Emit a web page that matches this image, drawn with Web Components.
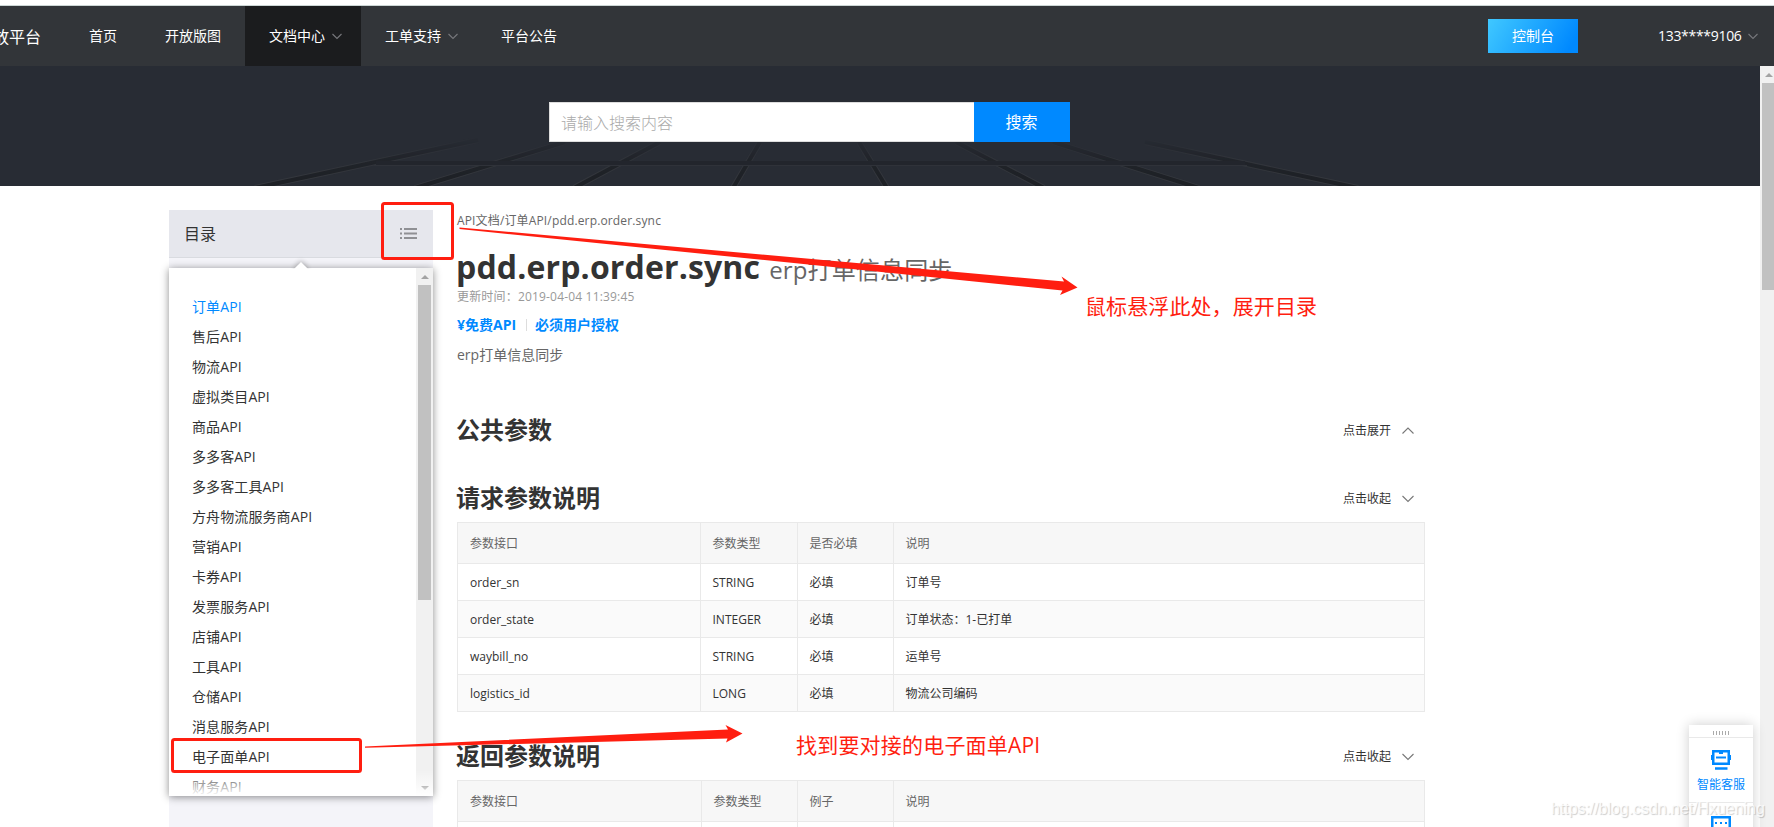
<!DOCTYPE html>
<html lang="zh-CN">
<head>
<meta charset="UTF-8">
<title>pdd.erp.order.sync</title>
<style>
    body{
        margin:0;
        width:1774px;
        height:827px;
        overflow:hidden;
        background-color:#fff;
        color:#333;
        font-family:"Open Sans", "Noto Sans CJK SC", sans-serif;
        font-size:12px;
    }
</style>
</head>
<body>
<open-platform-page></open-platform-page>

<script>
class ArrowIcon extends HTMLElement {

    constructor() {
        super();
        this.shadow = this.attachShadow({mode: 'open'});
        this.render();
    }

    render() {
        const size = Number(this.getAttribute('size') || 10);
        const up = this.hasAttribute('up');
        const half = size / 2;
        const points = up
            ? `0.5,${half + 0.5} ${half},1 ${size - 0.5},${half + 0.5}`
            : `0.5,1 ${half},${half + 0.5} ${size - 0.5},1`;

        this.shadow.innerHTML =
        /*html*/
        `
        <style>
            :host{
                display:block;
                width:${size}px;
                height:${half + 2}px;
            }

            svg{
                display:block;
            }
        </style>

        <svg width="${size}" height="${half + 2}">
            <polyline points="${points}" fill="none" stroke="currentColor" stroke-width="1.1"/>
        </svg>
        `;
    }
}

customElements.define('arrow-icon', ArrowIcon);

class NavItem extends HTMLElement {

    constructor() {
        super();
        this.shadow = this.attachShadow({mode: 'open'});
        this.render();
    }

    render() {
        const arrow = this.hasAttribute('dropdown') ? '<arrow-icon></arrow-icon>' : '';

        this.shadow.innerHTML =
        /*html*/
        `
        <style>
            :host{
                display:flex;
                align-items:center;
                box-sizing:border-box;
                height:60px;
                padding:0 24px 2px;
                color:#fff;
                font-size:14px;
                white-space:nowrap;
            }

            :host([active]){
                background-color:#1b1c1e;
            }

            arrow-icon{
                margin:2px -5px 0 7px;
                color:#77787c;
            }
        </style>

        <slot></slot>${arrow}
        `;
    }
}

customElements.define('nav-item', NavItem);

class TopNav extends HTMLElement {

    constructor() {
        super();
        this.shadow = this.attachShadow({mode: 'open'});
        this.render();
    }

    render() {
        this.shadow.innerHTML =
        /*html*/
        `
        <style>
            :host{
                display:flex;
                align-items:center;
                height:60px;
                margin-top:5px;
                border-top:1px solid #ccd6d5;
                background-color:#323539;
                color:#fff;
            }

            .logo{
                display:flex;
                justify-content:flex-end;
                width:41px;
                margin-right:24px;
                overflow:hidden;
                font-size:16px;
                white-space:nowrap;
            }

            nav{
                display:flex;
                flex:1;
            }

            .console{
                width:90px;
                height:34px;
                line-height:33px;
                text-align:center;
                font-size:14px;
                background:linear-gradient(120deg, #40c8ff, #0089ff 90%);
            }

            .account{
                display:flex;
                align-items:center;
                margin-left:80px;
                padding-right:16px;
                font-size:14px;
            }

            .account span{
                width:83px;
                padding-bottom:2px;
                letter-spacing:-0.3px;
            }

            .account arrow-icon{
                margin-left:7px;
                color:#77787c;
            }
        </style>

        <div class="logo">放平台</div>
        <nav>
            <nav-item>首页</nav-item>
            <nav-item>开放版图</nav-item>
            <nav-item active dropdown>文档中心</nav-item>
            <nav-item dropdown>工单支持</nav-item>
            <nav-item>平台公告</nav-item>
        </nav>
        <div class="console">控制台</div>
        <div class="account"><span>133****9106</span><arrow-icon></arrow-icon></div>
        `;
    }
}

customElements.define('top-nav', TopNav);

class SearchBanner extends HTMLElement {

    constructor() {
        super();
        this.shadow = this.attachShadow({mode: 'open'});
        this.render();
    }

    render() {
        // floor grid: one horizontal line and eight rays
        const rays = [
            [478, 74, 255, 122], [565, 76, 415, 122], [660, 76, 574, 122], [760, 76, 733, 122],
            [859, 76, 887, 122], [956, 76, 1044, 122], [1053, 76, 1199, 122], [1145, 76, 1358, 122]
        ];
        const lines = rays.map(([x1, y1, x2, y2]) =>
            `<path d="M${x1} ${y1}L${x2} ${y2}" stroke="#34373d" stroke-width="6"/>
             <path d="M${x1} ${y1}L${x2} ${y2}" stroke="#1e2126" stroke-width="4"/>`).join('');

        this.shadow.innerHTML =
        /*html*/
        `
        <style>
            :host{
                display:block;
                position:relative;
                height:120px;
                background-color:#282c34;
            }

            svg{
                position:absolute;
                left:0;
                top:0;
            }

            .search{
                display:flex;
                position:relative;
                box-sizing:border-box;
                width:521px;
                height:76px;
                margin-left:549px;
                padding-top:36px;
                font-size:16px;
                line-height:40px;
            }

            .input{
                box-sizing:border-box;
                width:425px;
                height:40px;
                padding-left:11px;
                border:1px solid #ddd;
                border-right:0;
                background-color:#fff;
                color:#aaa;
                font-weight:300;
            }

            .button{
                width:95px;
                padding-right:1px;
                text-align:center;
                background-color:#0089ff;
                color:#fff;
            }
        </style>

        <svg width="1760" height="120">
            <defs>
                <linearGradient id="fade" x1="0" y1="74" x2="0" y2="112" gradientUnits="userSpaceOnUse">
                    <stop offset="0" stop-color="#fff" stop-opacity="0.1"/>
                    <stop offset="0.5" stop-color="#fff" stop-opacity="0.7"/>
                    <stop offset="1" stop-color="#fff"/>
                </linearGradient>
                <mask id="floor" maskUnits="userSpaceOnUse" x="0" y="0" width="1760" height="120">
                    <rect width="1760" height="120" fill="url(#fade)"/>
                </mask>
            </defs>
            <g mask="url(#floor)">
                ${lines}
            </g>
            <rect x="376" y="95" width="869" height="4" fill="#22252c"/>
            <rect x="374" y="99" width="873" height="1" fill="#2f3239"/>
        </svg>
        <div class="search">
            <div class="input">请输入搜索内容</div>
            <div class="button">搜索</div>
        </div>
        `;
    }
}

customElements.define('search-banner', SearchBanner);

class ScrollTrack extends HTMLElement {

    constructor() {
        super();
        this.shadow = this.attachShadow({mode: 'open'});
        this.render();
    }

    render() {
        const thumb = this.getAttribute('thumb');
        const down = this.hasAttribute('down') ? '<i class="down"></i>' : '';

        this.shadow.innerHTML =
        /*html*/
        `
        <style>
            :host{
                display:flex;
                flex-direction:column;
                width:17px;
                flex:none;
                background-color:#f1f1f1;
            }

            .button{
                display:flex;
                align-items:center;
                justify-content:center;
                height:17px;
            }

            .up{
                border:4px solid transparent;
                border-top:0;
                border-bottom-color:#a3a3a3;
            }

            .down{
                border:4px solid transparent;
                border-bottom:0;
                border-top-color:#505050;
            }

            .thumb{
                height:${thumb}px;
                margin:0 2px;
                background-color:#c1c1c1;
            }

            .rest{
                flex:1;
            }
        </style>

        <div class="button"><i class="up"></i></div>
        <div class="thumb"></div>
        <div class="rest"></div>
        <div class="button">${down}</div>
        `;
    }
}

customElements.define('scroll-track', ScrollTrack);

class CatalogMenu extends HTMLElement {

    constructor() {
        super();
        this.shadow = this.attachShadow({mode: 'open'});
        this.render();
    }

    render() {
        const items = ['订单', '售后', '物流', '虚拟类目', '商品', '多多客', '多多客工具', '方舟物流服务商',
            '营销', '卡券', '发票服务', '店铺', '工具', '仓储', '消息服务', '电子面单', '财务'];

        this.shadow.innerHTML =
        /*html*/
        `
        <style>
            :host{
                display:block;
                position:relative;
                width:264px;
                background-color:#f4f4f9;
            }

            .title{
                display:flex;
                align-items:center;
                justify-content:space-between;
                height:47px;
                padding:0 16px 0 15px;
                border-bottom:1px solid #d9dbe0;
                background-color:#e6e7ed;
                font-size:16px;
            }

            .title span{
                padding-bottom:1px;
            }

            .dropdown{
                display:flex;
                position:absolute;
                left:0;
                top:58px;
                width:264px;
                height:528px;
                background-color:#fff;
                box-shadow:0 1px 8px rgba(0, 0, 0, 0.45);
            }

            .caret{
                position:absolute;
                left:127px;
                top:-4px;
                width:10px;
                height:10px;
                background-color:#fff;
                box-shadow:-1px -1px 5px rgba(0, 0, 0, 0.25);
                clip-path:polygon(-6px -6px, 16px -6px, -6px 16px);
                transform:rotate(45deg);
            }

            ul{
                flex:1;
                margin:0;
                padding:24px 0 0 23px;
                overflow:hidden;
                list-style:none;
                font-size:14px;
                line-height:30px;
            }

            li{
                letter-spacing:0.1px;
            }

            li:first-child{
                color:#0089ff;
            }

            .fade{
                position:absolute;
                left:0;
                right:0;
                bottom:0;
                height:26px;
                background:linear-gradient(rgba(255, 255, 255, 0), #fff);
            }
        </style>

        <div class="title">
            <span>目录</span>
            <svg width="17" height="11" fill="#8f9094">
                <path d="M0 0h2v2H0zM4 0h13v2H4zM0 4.500h2v2H0zM4 4.500h13v2H4zM0 9h2v2H0zM4 9h13v2H4z"/>
            </svg>
        </div>
        <div class="dropdown">
            <div class="caret"></div>
            <ul>${items.map(item => `<li>${item}API</li>`).join('')}</ul>
            <scroll-track thumb="315" down></scroll-track>
            <div class="fade"></div>
        </div>
        `;
    }
}

customElements.define('catalog-menu', CatalogMenu);

class DocSection extends HTMLElement {

    constructor() {
        super();
        this.shadow = this.attachShadow({mode: 'open'});
        this.render();
    }

    render() {
        const closed = this.hasAttribute('closed');

        this.shadow.innerHTML =
        /*html*/
        `
        <style>
            :host{
                display:block;
                margin-bottom:25px;
            }

            :host([closed]){
                margin-bottom:28px;
            }

            .head{
                display:flex;
                align-items:center;
                height:40px;
                padding-right:11px;
            }

            h2{
                flex:1;
                margin:0 0 0 -1px;
                font-size:24px;
                line-height:38px;
                padding-bottom:2px;
            }

            span{
                padding-bottom:2px;
                margin-right:11px;
            }

            arrow-icon{
                margin-bottom:1px;
                color:#777;
            }

            ::slotted(*){
                margin-top:3px;
            }
        </style>

        <div class="head">
            <h2>${this.getAttribute('heading')}</h2>
            <span>${closed ? '点击展开' : '点击收起'}</span>
            <arrow-icon size="12" ${closed ? 'up' : ''}></arrow-icon>
        </div>
        <slot></slot>
        `;
    }
}

customElements.define('doc-section', DocSection);

class ParamTable extends HTMLElement {

    constructor() {
        super();
        this.shadow = this.attachShadow({mode: 'open'});
        this.render();
    }

    render() {
        const heads = this.getAttribute('heads').split('|');
        const rows = this.getAttribute('rows').split(';').map(row => row.split('|'));

        this.shadow.innerHTML =
        /*html*/
        `
        <style>
            :host{
                display:block;
                border:1px solid #e9e9e9;
                border-width:1px 0 0 1px;
            }

            .row{
                display:grid;
                grid-template-columns:var(--columns, 243px 97px 96px) 1fr;
                height:37px;
                line-height:34px;
            }

            .row.even{
                background-color:#fafafa;
            }

            .row.header{
                height:41px;
                line-height:38px;
                background-color:#f7f7f7;
                color:#666;
            }

            .row div{
                padding:2px 0 0 12px;
                border:1px solid #e9e9e9;
                border-width:0 1px 1px 0;
            }

            .row div + div{
                padding-left:11.5px;
            }
        </style>

        <div class="row header">${heads.map(text => `<div>${text}</div>`).join('')}</div>
        ${rows.map((row, i) => `<div class="row ${i % 2 ? 'even' : ''}">${row.map(text => `<div>${text}</div>`).join('')}</div>`).join('')}
        `;
    }
}

customElements.define('param-table', ParamTable);

class ApiDoc extends HTMLElement {

    constructor() {
        super();
        this.shadow = this.attachShadow({mode: 'open'});
        this.render();
    }

    render() {
        this.shadow.innerHTML =
        /*html*/
        `
        <style>
            :host{
                display:block;
                width:968px;
                white-space:nowrap;
            }

            .breadcrumb{
                margin-top:1px;
                line-height:20px;
                letter-spacing:0.15px;
                color:#666;
            }

            h1{
                display:flex;
                align-items:baseline;
                margin:14px 0 1px -1px;
                height:44px;
                font-size:32px;
                line-height:44px;
                letter-spacing:0.15px;
            }

            h1 small{
                margin-left:9px;
                color:#666;
                font-size:24px;
                font-weight:normal;
            }

            .updated{
                line-height:14px;
                letter-spacing:0.18px;
                color:#999;
            }

            .tags{
                display:flex;
                align-items:center;
                margin-top:11px;
                line-height:20px;
                color:#0089ff;
                font-size:14px;
                font-weight:bold;
            }

            .tags i{
                width:1px;
                height:12px;
                margin:0 8px 0 10px;
                background-color:#ddd;
            }

            .summary{
                margin:10px 0 46px;
                line-height:20px;
                color:#666;
                font-size:14px;
            }
        </style>

        <div class="breadcrumb">API文档/订单API/pdd.erp.order.sync</div>
        <h1><span>pdd.erp.order.sync</span><small>erp打单信息同步</small></h1>
        <div class="updated">更新时间：2019-04-04 11:39:45</div>
        <div class="tags"><span>¥免费API</span><i></i><span>必须用户授权</span></div>
        <div class="summary">erp打单信息同步</div>
        <doc-section heading="公共参数" closed></doc-section>
        <doc-section heading="请求参数说明">
            <param-table heads="参数接口|参数类型|是否必填|说明"
                rows="order_sn|STRING|必填|订单号;order_state|INTEGER|必填|订单状态：1-已打单;waybill_no|STRING|必填|运单号;logistics_id|LONG|必填|物流公司编码"></param-table>
        </doc-section>
        <doc-section heading="返回参数说明">
            <param-table style="--columns:244px 96px 96px" heads="参数接口|参数类型|例子|说明" rows="|||"></param-table>
        </doc-section>
        `;
    }
}

customElements.define('api-doc', ApiDoc);

class ServiceWidget extends HTMLElement {

    constructor() {
        super();
        this.shadow = this.attachShadow({mode: 'open'});
        this.render();
    }

    render() {
        this.shadow.innerHTML =
        /*html*/
        `
        <style>
            :host{
                display:block;
                position:absolute;
                left:1689px;
                top:725px;
                width:64px;
                height:130px;
                background-color:#fff;
                box-shadow:0 0 12px rgba(0, 0, 0, 0.2);
                color:#0089ff;
            }

            .grip{
                display:flex;
                justify-content:center;
                gap:2px;
                height:6px;
                padding-top:6px;
                border-bottom:1px solid #e9e9e9;
            }

            .grip i{
                width:1px;
                height:4px;
                background-color:#aaa;
            }

            .entry{
                display:flex;
                flex-direction:column;
                align-items:center;
                height:52px;
                padding-top:12px;
                border-bottom:1px solid #e9e9e9;
            }

            .entry span{
                margin-top:6px;
                line-height:18px;
            }
        </style>

        <div class="grip"><i></i><i></i><i></i><i></i><i></i><i></i></div>
        <div class="entry">
            <svg width="20" height="20" fill="none" stroke="#0089ff">
                <rect x="2.250" y="1.250" width="15.500" height="12.500" stroke-width="2.500"/>
                <path d="M0.750 5v5M19.250 5v5" stroke-width="1.500"/>
                <path d="M5 7.500h10" stroke-width="2"/>
                <path d="M8 3h4" stroke-width="2"/>
                <path d="M4 18.500h12.500" stroke-width="2.500"/>
            </svg>
            <span>智能客服</span>
        </div>
        <div class="entry">
            <svg width="20" height="20" fill="none" stroke="#0089ff">
                <path d="M1.250 16V2.250h17.500v14z" stroke-width="2.500"/>
                <path d="M4 8h2M9 8h2M14 8h2" stroke-width="2"/>
            </svg>
        </div>
        `;
    }
}

customElements.define('service-widget', ServiceWidget);

// red boxes, arrows and notes drawn over the page
class NoteLayer extends HTMLElement {

    constructor() {
        super();
        this.shadow = this.attachShadow({mode: 'open'});
        this.render();
    }

    render() {
        this.shadow.innerHTML =
        /*html*/
        `
        <style>
            :host{
                display:block;
                position:absolute;
                left:0;
                top:0;
                width:1774px;
                height:827px;
                overflow:hidden;
            }

            svg{
                display:block;
            }

            p{
                position:absolute;
                margin:0;
                color:#ff1e10;
                font-size:21px;
                line-height:30px;
                white-space:nowrap;
            }

            .open{
                left:1085px;
                top:291px;
                letter-spacing:0.1px;
            }

            .find{
                left:796px;
                top:730px;
                letter-spacing:0.2px;
            }

            .watermark{
                left:1551px;
                top:794px;
                color:rgba(255, 255, 255, 0.8);
                font-family:"Liberation Sans", sans-serif;
                font-size:16px;
                letter-spacing:-0.05px;
                text-shadow:1px 1px 1px rgba(0, 0, 0, 0.2);
            }
        </style>

        <svg width="1774" height="827">
            <g fill="none" stroke="#ff1e10" stroke-width="3">
                <rect x="382.500" y="203.500" width="70" height="55" rx="2"/>
                <rect x="172.500" y="739.500" width="188" height="32" rx="2"/>
            </g>
            <g fill="#ff1e10">
                <path d="M459.500 227.500L1064 281.500L1061.500 276.500L1077.500 287.500L1060 295L1062.500 290.500L459.500 229Z"/>
                <path d="M365 746.500L728 729.500L725.500 725L742.500 733.500L726 742.500L727.500 738.500L365 747.800Z"/>
            </g>
        </svg>
        <p class="open">鼠标悬浮此处，展开目录</p>
        <p class="find">找到要对接的电子面单API</p>
        <p class="watermark">https://blog.csdn.net/Hxuening</p>
        `;
    }
}

customElements.define('note-layer', NoteLayer);

class OpenPlatformPage extends HTMLElement {

    constructor() {
        super();
        this.shadow = this.attachShadow({mode: 'open'});
        this.render();
    }

    render() {
        this.shadow.innerHTML =
        /*html*/
        `
        <style>
            :host{
                display:flex;
                flex-direction:column;
                height:827px;
                overflow:hidden;
            }

            .view{
                display:flex;
                flex:1;
                min-height:0;
            }

            .page{
                display:flex;
                flex-direction:column;
                width:1760px;
                flex:none;
                overflow:hidden;
            }

            search-banner{
                flex:none;
            }

            .content{
                display:flex;
                flex:1;
                gap:24px;
                min-height:0;
                padding:24px 0 0 169px;
            }
        </style>

        <top-nav></top-nav>
        <div class="view">
            <div class="page">
                <search-banner></search-banner>
                <div class="content">
                    <catalog-menu></catalog-menu>
                    <api-doc></api-doc>
                </div>
            </div>
            <scroll-track thumb="207"></scroll-track>
        </div>
        <service-widget></service-widget>
        <note-layer></note-layer>
        `;
    }
}

customElements.define('open-platform-page', OpenPlatformPage);
</script>
</body>
</html>
